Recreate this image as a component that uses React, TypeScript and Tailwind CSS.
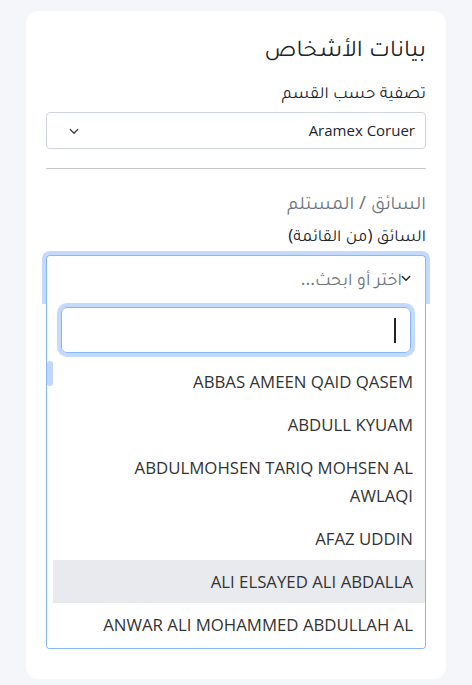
const drivers = [
  "ABBAS AMEEN QAID QASEM",
  "ABDULL KYUAM",
  "ABDULMOHSEN TARIQ MOHSEN AL AWLAQI",
  "AFAZ UDDIN",
  "ALI ELSAYED ALI ABDALLA",
  "ANWAR ALI MOHAMMED ABDULLAH AL AWADHI",
]

function Chevron({ className, width = 2 }: { className?: string; width?: number }) {
  return (
    <svg viewBox="0 0 16 16" className={className} fill="none" stroke="currentColor" strokeWidth={width} strokeLinecap="round" strokeLinejoin="round">
      <path d="M3 6l5 5 5-5" />
    </svg>
  )
}

export default function App() {
  return (
    <div
      dir="rtl"
      className="min-h-[685px] bg-[#f4f6fa] px-[26px] pt-[11px] font-['Open_Sans',Tajawal,sans-serif] text-[#212529]"
    >
      <div className="h-[668px] overflow-hidden rounded-xl bg-white px-5 pt-[21px]">
        <h2 className="text-[24px] leading-[30px]">بيانات الأشخاص</h2>

        <label className="mt-[19px] block text-[17px] leading-[22px]">تصفية حسب القسم</label>
        <div className="mt-[9px] flex h-[37px] items-center justify-between rounded border border-[#ced4da] pl-[21px] pr-[10px] text-[15px]">
          <span>Aramex Coruer</span>
          <Chevron className="size-[12px] text-[#343a40]" width={1.6} />
        </div>

        <hr className="mt-[19px] border-t border-[#c9c9c9]" />

        <h3 className="mt-[21px] text-[19px] leading-[24px] text-[#6c757d]">السائق / المستلم</h3>
        <label className="mt-[10px] block text-[17px] leading-[22px]">السائق (من القائمة)</label>

        <div className="mt-[9px] flex flex-col">
          <div className="flex h-[45px] items-center rounded-t border border-b-0 border-[#86b7fe] pr-[23px] shadow-[0_0_0_4px_#c4dafd]">
            <span className="relative text-[18px] text-[#6c757d]">
              اختر أو ابحث...
              <Chevron className="absolute -right-[10px] top-[7px] size-[12px] text-[#212529]" />
            </span>
          </div>
          <div className="relative z-10 flex h-[349px] flex-col overflow-hidden rounded-b border border-t-0 border-[#86b7fe] bg-white">
            <div className="px-[14px] pt-[7px] pb-[7px]">
              <div className="flex h-[46px] items-center rounded-md border border-[#86b7fe] pr-[14px] shadow-[0_0_0_4px_#c4dafd]">
                <div className="h-[25px] w-[2px] bg-[#212529]" />
              </div>
            </div>
            <div className="flex min-h-0 flex-1">
              <div className="order-last w-[6px] shrink-0 pt-[1px]">
                <div className="h-[25px] w-[6px] rounded-full bg-[#c5d6fb]" />
              </div>
              <ul className="flex-1 text-[16.8px] text-[#333]">
                {drivers.map((d) => (
                  <li
                    key={d}
                    className={
                      "py-[7.5px] pl-[34px] pr-[12px] leading-[28px] " +
                      (d === "ALI ELSAYED ALI ABDALLA" ? "bg-[#e8eaed]" : "")
                    }
                  >
                    {d}
                  </li>
                ))}
              </ul>
            </div>
            <div className="pointer-events-none absolute inset-x-0 bottom-0 h-[12px] bg-gradient-to-t from-white via-white/90 to-white/0" />
          </div>
        </div>
      </div>
    </div>
  )
}
